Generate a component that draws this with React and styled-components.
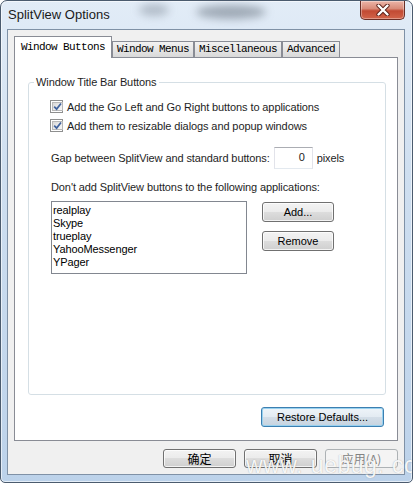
import React from "react";
import styled, { createGlobalStyle, css } from "styled-components";

const UI = `"Liberation Sans", Arial, sans-serif`;
const MONO = `"Liberation Mono", "Courier New", monospace`;
const CJK = `"Noto Sans CJK SC", "Liberation Sans", sans-serif`;

const Global = createGlobalStyle`
  html, body { margin: 0; padding: 0; background: #fff; }
  body { width: 413px; height: 483px; overflow: hidden; }
  * { box-sizing: border-box; }
`;

const Window = styled.div`
  position: relative;
  width: 413px;
  height: 483px;
  display: flex;
  flex-direction: column;
  border: 1px solid #4b5b6e;
  border-radius: 7px 7px 5px 5px;
  background: linear-gradient(180deg, #e2ecf7 0%, #cfdff0 35%, #bcd2ea 100%);
  box-shadow: inset 0 0 0 1px rgba(255, 255, 255, 0.6);
  overflow: hidden;
  font-family: ${UI};
  letter-spacing: -0.1px;
`;

const TitleBar = styled.div`
  position: relative;
  height: 28px;
  flex: none;
  display: flex;
  align-items: flex-start;
  justify-content: space-between;
`;

const Blob = styled.span`
  position: absolute;
  left: ${(p) => p.$x}px;
  top: ${(p) => p.$y}px;
  width: ${(p) => p.$w}px;
  height: ${(p) => p.$h}px;
  border-radius: 50%;
  background: ${(p) => p.$c};
  filter: blur(4px);
`;

const Title = styled.div`
  position: relative;
  z-index: 1;
  padding-left: 7px;
  line-height: 28px;
  font-size: 13px;
  letter-spacing: 0;
  color: #1a1a1a;
`;

const CloseButton = styled.div`
  position: relative;
  z-index: 1;
  width: 45px;
  height: 19px;
  margin-right: 7px;
  border: 1px solid #6a2e26;
  border-top: none;
  border-radius: 0 0 5px 5px;
  background: linear-gradient(180deg, #ecb5a8 0%, #d98b79 42%, #c24a33 55%, #d2644a 100%);
  box-shadow: inset 0 0 0 1px rgba(255, 255, 255, 0.35);
  display: flex;
  align-items: center;
  justify-content: center;
`;

const Client = styled.div`
  flex: 1;
  margin: 0 7px 7px 6px;
  border: 1px solid #7f91a6;
  background: #f0f0f0;
  padding: 6px;
  display: flex;
  flex-direction: column;
  min-height: 0;
`;

const TabStrip = styled.div`
  height: 21px;
  flex: none;
  display: flex;
  align-items: flex-end;
`;

const Tab = styled.div`
  position: relative;
  height: 16px;
  padding: 0 4px;
  border: 1px solid #898c95;
  border-bottom: none;
  background: linear-gradient(180deg, #f2f2f2 0%, #e6e6e6 50%, #d9d9d9 100%);
  font-family: ${MONO};
  font-size: 11px;
  letter-spacing: -0.6px;
  line-height: 15px;
  color: #000;
  white-space: nowrap;
  ${(p) =>
    p.$active &&
    css`
      z-index: 1;
      height: 22px;
      margin-bottom: -1px;
      padding: 0 6px;
      background: #fff;
      line-height: 20px;
    `}
`;

const Panel = styled.div`
  flex: 1;
  min-height: 0;
  border: 1px solid #898c95;
  background: #fff;
  display: flex;
  flex-direction: column;
`;

const GroupBox = styled.fieldset`
  margin: 17px 11px 0 13px;
  padding: 0;
  height: 320px;
  border: 1px solid #d5dfe5;
  border-radius: 3px;
  min-inline-size: 0;
`;

const GroupLabel = styled.legend`
  margin-left: 5px;
  padding: 0 2px;
  font-size: 11px;
  line-height: 14px;
  color: #1e1e1e;
`;

const GroupBody = styled.div`
  padding: 8px 0 0 21px;
  display: flex;
  flex-direction: column;
  align-items: flex-start;
`;

const CheckRow = styled.label`
  height: 19px;
  display: flex;
  align-items: center;
  gap: 4px;
  padding-top: 1px;
  font-size: 11px;
  color: #1e1e1e;
`;

const CheckBox = styled.span`
  width: 13px;
  height: 13px;
  margin-top: -1px;
  border: 1px solid #8e8f8f;
  background: #fff;
  padding: 1px;
  display: flex;
  flex: none;
`;

const CheckInner = styled.span`
  flex: 1;
  position: relative;
  background: linear-gradient(135deg, #d8d8d8 0%, #ececec 60%, #f8f8f8 100%);
  border: 1px solid #b8b8b8;
  display: flex;
  align-items: center;
  justify-content: center;
`;

const GapRow = styled.div`
  margin: 12px 0 0 1px;
  height: 22px;
  display: flex;
  align-items: center;
  gap: 4px;
  font-size: 11px;
  color: #1e1e1e;
`;

const NumberBox = styled.div`
  width: 39px;
  height: 22px;
  border: 1px solid #e2e3ea;
  border-top-color: #abadb3;
  border-bottom-color: #e3e9ef;
  background: #fff;
  padding-right: 7px;
  text-align: right;
  line-height: 19px;
  font-size: 11px;
`;

const Caption = styled.div`
  margin: 11px 0 0 1px;
  font-size: 11px;
  line-height: 14px;
  color: #1e1e1e;
`;

const ListRow = styled.div`
  margin: 7px 0 0 1px;
  display: flex;
  align-items: flex-start;
`;

const ListBox = styled.ul`
  width: 196px;
  height: 73px;
  margin: 0;
  padding: 2px 1px 0;
  list-style: none;
  border: 1px solid #828790;
  background: #fff;
  font-size: 11px;
  line-height: 13px;
  color: #000;
`;

const SideButtons = styled.div`
  margin: 1px 0 0 15px;
  display: flex;
  flex-direction: column;
  gap: 9px;
`;

const Button = styled.button`
  width: ${(p) => p.$w}px;
  height: ${(p) => p.$h}px;
  margin: 0;
  padding: 0;
  font-family: ${UI};
  font-size: 11px;
  color: #000;
  border: 1px solid #707070;
  border-radius: 3px;
  background: linear-gradient(180deg, #f3f3f3 0%, #ebebeb 49%, #dddddd 50%, #cfcfcf 100%);
  box-shadow: inset 0 0 0 1px rgba(255, 255, 255, 0.75);
  ${(p) =>
    p.$cjk &&
    css`
      font-family: ${CJK};
      font-size: 12px;
    `}
  ${(p) =>
    p.$default &&
    css`
      border-color: #3c7fb1;
      background: linear-gradient(180deg, #eef4f9 0%, #e3ebf2 49%, #d4dee8 50%, #c6d3df 100%);
      box-shadow: inset 0 0 0 1px #98d1ef;
    `}
  ${(p) =>
    p.disabled &&
    css`
      color: #838383;
      border-color: #adb2b5;
      background: #f4f4f4;
      box-shadow: none;
    `}
`;

const RestoreRow = styled.div`
  margin: 12px 13px 0 0;
  display: flex;
  justify-content: flex-end;
`;

const Footer = styled.div`
  margin-top: 8px;
  flex: none;
  display: flex;
  justify-content: flex-end;
  gap: 8px;
`;

const Watermark = styled.div`
  position: absolute;
  left: 245px;
  top: 451px;
  font-family: ${UI};
  font-size: 23px;
  letter-spacing: 0.5px;
  word-spacing: 1px;
  white-space: nowrap;
  color: rgba(255, 255, 255, 0.92);
  text-shadow: 0 0 1px rgba(90, 90, 90, 0.5);
  pointer-events: none;
`;

const Check = () => (
  <svg width="9" height="9" viewBox="0 0 9 9">
    <path d="M1.2 4.6 L3.6 7.1 L8 1.4" fill="none" stroke="#41639e" strokeWidth="1.7" />
  </svg>
);

const CloseGlyph = () => (
  <svg width="14" height="12" viewBox="0 0 14 12">
    <path d="M2.5 1.5 L11.5 10.5 M11.5 1.5 L2.5 10.5" stroke="#5a1f18" strokeWidth="4.2" strokeLinecap="round" />
    <path d="M2.5 1.5 L11.5 10.5 M11.5 1.5 L2.5 10.5" stroke="#ffffff" strokeWidth="2.4" strokeLinecap="round" />
  </svg>
);

const tabs = ["Window Buttons", "Window Menus", "Miscellaneous", "Advanced"];
const apps = ["realplay", "Skype", "trueplay", "YahooMessenger", "YPager"];

export default function App() {
  return (
    <>
      <Global />
      <Window>
        <TitleBar>
          <Blob $x={138} $y={3} $w={30} $h={12} $c="rgba(120,130,145,0.45)" />
          <Blob $x={195} $y={4} $w={70} $h={14} $c="rgba(80,90,105,0.45)" />
          <Title>SplitView Options</Title>
          <CloseButton>
            <CloseGlyph />
          </CloseButton>
        </TitleBar>
        <Client>
          <TabStrip>
            {tabs.map((t, i) => (
              <Tab key={t} $active={i === 0}>
                {t}
              </Tab>
            ))}
          </TabStrip>
          <Panel>
            <GroupBox>
              <GroupLabel>Window Title Bar Buttons</GroupLabel>
              <GroupBody>
                <CheckRow>
                  <CheckBox>
                    <CheckInner>
                      <Check />
                    </CheckInner>
                  </CheckBox>
                  Add the Go Left and Go Right buttons to applications
                </CheckRow>
                <CheckRow>
                  <CheckBox>
                    <CheckInner>
                      <Check />
                    </CheckInner>
                  </CheckBox>
                  Add them to resizable dialogs and popup windows
                </CheckRow>
                <GapRow>
                  Gap between SplitView and standard buttons:
                  <NumberBox>0</NumberBox>
                  pixels
                </GapRow>
                <Caption>Don't add SplitView buttons to the following applications:</Caption>
                <ListRow>
                  <ListBox>
                    {apps.map((a) => (
                      <li key={a}>{a}</li>
                    ))}
                  </ListBox>
                  <SideButtons>
                    <Button $w={72} $h={20}>Add...</Button>
                    <Button $w={72} $h={20}>Remove</Button>
                  </SideButtons>
                </ListRow>
              </GroupBody>
            </GroupBox>
            <RestoreRow>
              <Button $w={123} $h={20} $default>
                Restore Defaults...
              </Button>
            </RestoreRow>
          </Panel>
          <Footer>
            <Button $w={73} $h={19} $cjk>确定</Button>
            <Button $w={73} $h={19} $cjk>取消</Button>
            <Button $w={73} $h={19} $cjk disabled>应用(A)</Button>
          </Footer>
        </Client>
        <Watermark>www. uebug. cc</Watermark>
      </Window>
    </>
  );
}
